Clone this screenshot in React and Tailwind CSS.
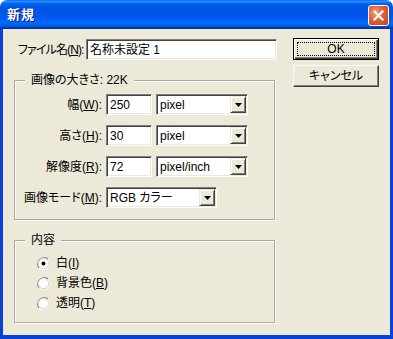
const sunken =
  "border border-t-[#808080] border-l-[#808080] border-b-white border-r-white shadow-[inset_1px_1px_0_#404040,inset_-1px_-1px_0_#ECE9D8] bg-white";
const raised =
  "border border-t-[#ECE9D8] border-l-[#ECE9D8] border-b-[#404040] border-r-[#404040] shadow-[inset_1px_1px_0_white,inset_-1px_-1px_0_#808080] bg-[#ECE9D8]";
const etched =
  "relative border border-[#ACA899] shadow-[inset_1px_1px_0_white,1px_1px_0_white]";

const Key = ({ children }) => <span className="underline">{children}</span>;

const Arrow = () => (
  <svg width="7" height="4" viewBox="0 0 7 4">
    <path d="M0 0h7L3.5 4z" fill="#000" />
  </svg>
);

const Select = ({ w, value }) => (
  <div className={`${w} h-[21px] flex items-center ${sunken}`}>
    <span className="flex-1 pl-[3px] whitespace-nowrap">{value}</span>
    <div className={`w-[16px] h-[17px] mr-[1px] flex items-center justify-center ${raised}`}>
      <Arrow />
    </div>
  </div>
);

const Field = ({ w, value }) => (
  <div className={`${w} h-[21px] flex items-center pl-[3px] ${sunken}`}>
    <span className="whitespace-nowrap">{value}</span>
  </div>
);

const Row = ({ label, k, children }) => (
  <div className="h-[21px] flex items-center">
    <div className="w-[87px] text-right whitespace-nowrap">
      {label}(<Key>{k}</Key>):
    </div>
    <div className="ml-[4px] flex items-center gap-[4px]">{children}</div>
  </div>
);

const Radio = ({ checked, label, k }) => (
  <div className="h-[20px] flex items-center">
    <svg width="13" height="13" viewBox="0 0 12 12">
      <path d="M10.2 1.8A6 6 0 0 0 1.8 10.2" fill="none" stroke="#8a8a8a" strokeWidth="1" />
      <path d="M1.8 10.2A6 6 0 0 0 10.2 1.8" fill="none" stroke="#ffffff" strokeWidth="1" />
      <circle cx="6" cy="6" r="4.8" fill="#fff" stroke="#cfccc0" strokeWidth="0.8" />
      {checked && <circle cx="6" cy="6" r="1.8" fill="#000" />}
    </svg>
    <span className="ml-[6px]">
      {label}(<Key>{k}</Key>)
    </span>
  </div>
);

export default function App() {
  return (
    <div className="w-[393px] h-[339px] flex flex-col text-[12px] text-black font-['Liberation_Sans','Noto_Sans_CJK_JP',sans-serif] [font-feature-settings:'palt'] leading-none">
      <div className="h-[29px] shrink-0 rounded-t-[7px] flex items-center pl-[7px] pr-[4px] bg-[linear-gradient(180deg,#0058EE_0%,#3593FF_4%,#288EFF_6%,#127DFF_8%,#036FFC_10%,#0262EE_14%,#0057E5_20%,#0054E3_24%,#0055EB_56%,#005BF5_66%,#026AFE_76%,#0062EF_86%,#0052D6_92%,#0040AB_94%,#003092_100%)]">
        <span className="text-white font-bold text-[13px] tracking-[1px] [text-shadow:1px_1px_0_#0a1883]">
          新規
        </span>
        <div className="ml-auto mt-[2px] w-[21px] h-[21px] rounded-[3px] border border-white bg-[radial-gradient(circle_at_35%_35%,#F0A080_0%,#E0603A_45%,#C3421B_100%)] flex items-center justify-center">
          <svg width="11" height="11" viewBox="0 0 11 11">
            <path d="M1.5 1.5l8 8M9.5 1.5l-8 8" stroke="#fff" strokeWidth="2.2" strokeLinecap="square" />
          </svg>
        </div>
      </div>

      <div className="flex-1 flex border-x-[3px] border-b-[4px] border-[#0841D6] bg-[#ECE9D8] pl-[11px] pt-[9px]">
        <div className="w-[263px] flex flex-col">
          <div className="h-[21px] mt-[1px] flex items-center">
            <div className="w-[72px] shrink-0 pl-[4px] whitespace-nowrap tracking-[-0.9px]">
              ファイル名(<Key>N</Key>):
            </div>
            <Field w="w-[191px]" value="名称未設定 1" />
          </div>

          <div className={`mt-[20px] w-[261px] h-[140px] pt-[13px] flex flex-col gap-[10px] ${etched}`}>
            <span className="absolute -top-[7px] left-[10px] px-[6px] bg-[#ECE9D8]">
              画像の大きさ: 22K
            </span>
            <Row label="幅" k="W">
              <Field w="w-[46px]" value="250" />
              <Select w="w-[92px]" value="pixel" />
            </Row>
            <Row label="高さ" k="H">
              <Field w="w-[46px]" value="30" />
              <Select w="w-[92px]" value="pixel" />
            </Row>
            <Row label="解像度" k="R">
              <Field w="w-[46px]" value="72" />
              <Select w="w-[92px]" value="pixel/inch" />
            </Row>
            <Row label="画像モード" k="M">
              <Select w="w-[111px]" value="RGB カラー" />
            </Row>
          </div>

          <div className={`mt-[20px] w-[261px] h-[83px] pt-[12px] pl-[22px] flex flex-col ${etched}`}>
            <span className="absolute -top-[7px] left-[10px] px-[6px] bg-[#ECE9D8]">内容</span>
            <Radio checked label="白" k="I" />
            <Radio label="背景色" k="B" />
            <Radio label="透明" k="T" />
          </div>
        </div>

        <div className="ml-[16px] w-[86px] flex flex-col">
          <div className="h-[22px] border border-black flex">
            <div className="flex-1 flex p-[3px] shadow-[inset_1px_1px_0_white,inset_-1px_-1px_0_#404040,inset_-2px_-2px_0_#808080]">
              <div className="flex-1 border border-dotted border-black flex items-center justify-center">
                OK
              </div>
            </div>
          </div>
          <div className="mt-[5px] h-[22px] flex items-center justify-center border border-t-white border-l-white border-b-[#404040] border-r-[#404040] shadow-[inset_-1px_-1px_0_#808080]">
            キャンセル
          </div>
        </div>
      </div>
    </div>
  );
}
